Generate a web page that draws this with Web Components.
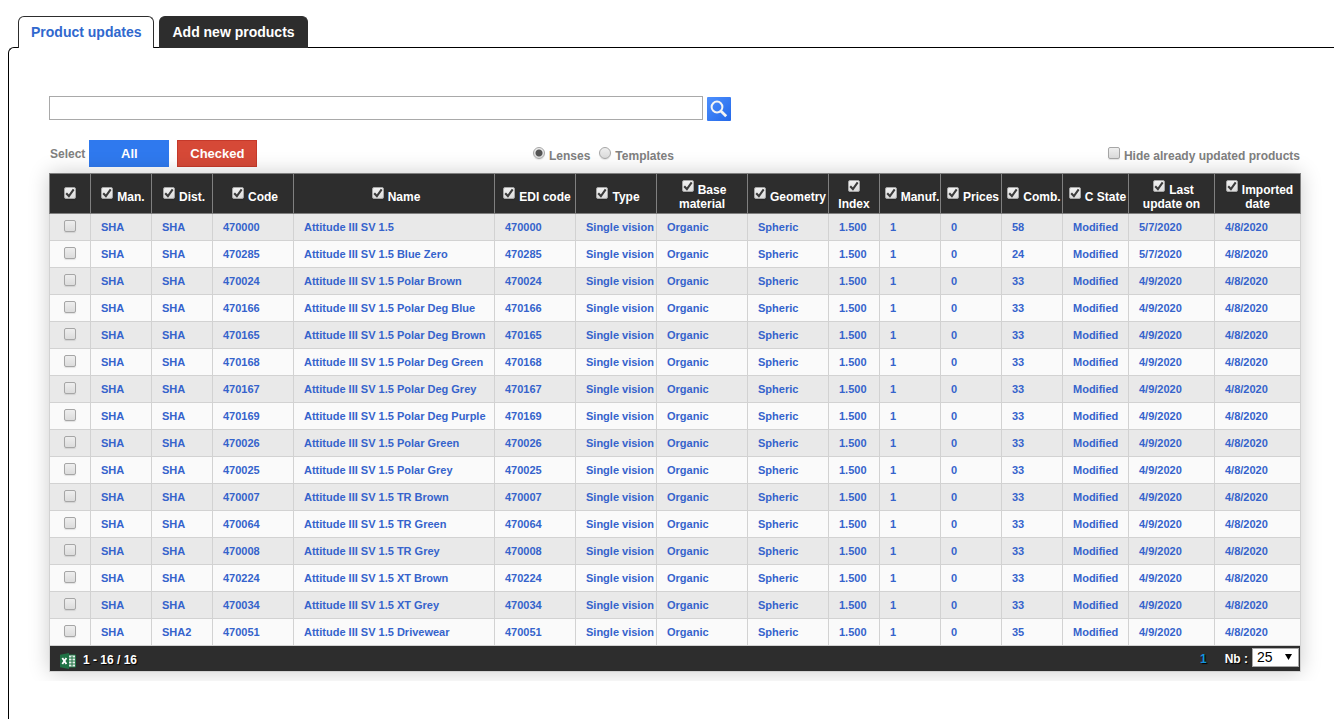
<!DOCTYPE html>
<html lang="en">
<head>
<meta charset="utf-8">
<title>Product updates</title>
<style>
  html { background: #fff; }
  body { margin: 0; font: bold 12px/14px "Liberation Sans", Arial, sans-serif; color: #808080; }
</style>
</head>
<body>
<app-page>
  <tab-bar slot="tabs">
    <tab-item active>Product updates</tab-item>
    <tab-item>Add new products</tab-item>
  </tab-bar>
  <search-box></search-box>
  <select-bar></select-bar>
  <data-card>
    <product-table></product-table>
    <table-footer slot="footer"></table-footer>
  </data-card>
</app-page>

<script>
const svgUrl = (w, h, body) =>
  `url("data:image/svg+xml,${encodeURIComponent(`<svg xmlns='http://www.w3.org/2000/svg' width='${w}' height='${h}' viewBox='0 0 ${w} ${h}'>${body}</svg>`)}")`;

const tick = svgUrl(12, 12, `<path d='M2.2 6.2L4.9 9L9.7 2.4' fill='none' stroke='#3c3c3c' stroke-width='2.1'/>`);
const arrow = svgUrl(7, 6, `<path d='M0 0H7L3.5 6Z' fill='#000'/>`);

const toggles = `
  input[type=checkbox], input[type=radio] {
    appearance: none; box-sizing: border-box; width: 12px; height: 12px;
    margin: 3px 4px 1px 4px; border: 1px solid #a6a6a6; border-radius: 2px;
    background: linear-gradient(#eee, #dcdcdc); box-shadow: 0 1px 1px rgba(0,0,0,.1);
    vertical-align: baseline; flex: none;
  }
  input[type=checkbox]:checked { background: ${tick} center / 12px 12px no-repeat, linear-gradient(#f2f2f2, #dcdcdc); }
  input[type=radio] { border-radius: 50%; }
  input[type=radio]:checked { background: radial-gradient(circle, #555 0 3px, transparent 4px), linear-gradient(#eee, #dcdcdc); }
`;

function define(name, html, setup) {
  const template = document.createElement('template');
  template.innerHTML = html;
  customElements.define(name, class extends HTMLElement {
    constructor() {
      super();
      this.attachShadow({ mode: 'open' }).append(template.content.cloneNode(true));
      if (setup) setup(this.shadowRoot);
    }
  });
}

define('app-page', `
  <style>
    :host { display: flex; flex-direction: column; box-sizing: border-box; min-height: 100vh; padding: 16px 0 0 8px; }
    main { flex: 1; padding: 48px 33px 40px 40px; border: solid #000; border-width: 1px 0 0 1px; border-top-left-radius: 6px; }
  </style>
  <slot name="tabs"></slot>
  <main><slot></slot></main>`);

define('tab-bar', `
  <style>
    :host { display: block; position: relative; margin: 0 0 -1px 10px; }
    nav { display: flex; gap: 5px; }
  </style>
  <nav><slot></slot></nav>`);

define('tab-item', `
  <style>
    :host { display: block; }
    a { display: block; box-sizing: border-box; height: 32px; padding: 0 12px; line-height: 31px; font-size: 14px;
        white-space: nowrap; text-decoration: none; color: #fff; background: #2d2d2d;
        border: 1px solid #2d2d2d; border-bottom: 0; border-radius: 6px 6px 0 0; }
    :host([active]) a { color: #3068ce; background: #fff; }
  </style>
  <a href="#"><slot></slot></a>`);

define('search-box', `
  <style>
    :host { display: block; }
    form { display: flex; gap: 4px; margin: 0; }
    input { flex: 0 1 654px; min-width: 0; box-sizing: border-box; height: 24px; padding: 2px 6px; border: 1px solid #a9a9a9;
            font: 13px "Liberation Sans", Arial, sans-serif; }
    button { width: 24px; height: 24px; margin: 1px 0 0; padding: 0; border: 0; border-radius: 1px;
             background: linear-gradient(135deg, #4d90fe, #2468e8); }
    svg { display: block; }
  </style>
  <form role="search">
    <input type="text" aria-label="Search products">
    <button type="button" aria-label="Search">
      <svg width="24" height="24" viewBox="0 0 24 24" fill="none" stroke="#f4f4f4">
        <circle cx="10" cy="10" r="5.4" stroke-width="2"/>
        <path d="M13.6 13.8L19.2 19.2" stroke-width="2.8"/>
      </svg>
    </button>
  </form>`);

define('select-bar', `
  <style>
    ${toggles}
    :host { display: grid; grid-template-columns: 480fr 772fr; margin: 19px 0 6px; }
    div { display: flex; align-items: center; }
    .pick { gap: 8px; padding-left: 1px; }
    .pick span { margin-right: -4px; }
    .pick span, .pick button { flex: none; }
    button { box-sizing: border-box; width: 80px; height: 27px; padding: 0; border: 1px solid #2f79ee; background: #2f79ee; color: #fff;
             font: bold 13px "Liberation Sans", Arial, sans-serif; }
    button.checked { border-color: #c5392a; background: #d64937; }
    .filters { justify-content: space-between; padding-right: 1px; }
    .kinds { gap: 5px; }
    label { display: block; white-space: nowrap; }
  </style>
  <div class="pick"><span>Select</span><button type="button">All</button><button type="button" class="checked">Checked</button></div>
  <div class="filters">
    <div class="kinds">
      <label><input type="radio" name="kind" checked>Lenses</label>
      <label><input type="radio" name="kind">Templates</label>
    </div>
    <label><input type="checkbox">Hide already updated products</label>
  </div>`);

define('data-card', `
  <style>
    :host { display: block; clip-path: inset(-24px -24px -9px -24px); }
    section { box-shadow: 0 0 20px rgba(0,0,0,.2); }
  </style>
  <section><slot></slot><slot name="footer"></slot></section>`);

const columns = [
  ['', 41], ['Man.', 61], ['Dist.', 61], ['Code', 81], ['Name', 201], ['EDI code', 81], ['Type', 81], ['Base material', 91],
  ['Geometry', 81], ['Index', 51], ['Manuf.', 61], ['Prices', 61], ['Comb.', 61], ['C State', 66], ['Last update on', 86], ['Imported date', 86],
];

const products = [
  ['470000', '', 58, '5/7/2020'],
  ['470285', 'Blue Zero', 24, '5/7/2020'],
  ['470024', 'Polar Brown', 33, '4/9/2020'],
  ['470166', 'Polar Deg Blue', 33, '4/9/2020'],
  ['470165', 'Polar Deg Brown', 33, '4/9/2020'],
  ['470168', 'Polar Deg Green', 33, '4/9/2020'],
  ['470167', 'Polar Deg Grey', 33, '4/9/2020'],
  ['470169', 'Polar Deg Purple', 33, '4/9/2020'],
  ['470026', 'Polar Green', 33, '4/9/2020'],
  ['470025', 'Polar Grey', 33, '4/9/2020'],
  ['470007', 'TR Brown', 33, '4/9/2020'],
  ['470064', 'TR Green', 33, '4/9/2020'],
  ['470008', 'TR Grey', 33, '4/9/2020'],
  ['470224', 'XT Brown', 33, '4/9/2020'],
  ['470034', 'XT Grey', 33, '4/9/2020'],
  ['470051', 'Drivewear', 35, '4/9/2020', 'SHA2'],
];

define('product-table', `
  <style>
    ${toggles}
    :host { display: block; }
    table { width: 100%; table-layout: fixed; border-collapse: collapse; }
    th { height: 39px; padding: 0; border: 1px solid #808080; background: #2d2d2d; color: #fff; vertical-align: middle; }
    td { height: 26px; padding: 0 0 0 10px; border: 1px solid #d2d2d2; font-size: 11px; color: #3563cc; white-space: nowrap; }
    th label { display: block; }
    th input[type=checkbox] { margin-bottom: 2px; }
    td:first-child { padding: 0; text-align: center; }
    td:first-child input { display: block; margin: 0 auto 2px; }
    tbody tr:nth-child(odd) { background: #e9e9e9; }
    tbody tr:nth-child(even) { background: #fafafa; }
  </style>
  <table><colgroup></colgroup><thead><tr></tr></thead><tbody></tbody></table>`, root => {
  root.querySelector('colgroup').innerHTML = columns.map(([, w]) => `<col style="width:${w}px">`).join('');
  root.querySelector('thead tr').innerHTML = columns.map(([name]) =>
    `<th scope="col"><label><input type="checkbox" checked${name ? '' : ' aria-label="Select all"'}>${name}</label></th>`).join('');
  root.querySelector('tbody').innerHTML = products.map(([code, variant, comb, date, dist = 'SHA']) => {
    const cells = ['SHA', dist, code, `Attitude III SV 1.5 ${variant}`.trim(), code, 'Single vision', 'Organic', 'Spheric', '1.500', 1, 0, comb, 'Modified', date, '4/8/2020'];
    return `<tr><td><input type="checkbox" aria-label="Select ${code}"></td>${cells.map(c => `<td>${c}</td>`).join('')}</tr>`;
  }).join('');
});

define('table-footer', `
  <style>
    :host { display: flex; align-items: center; box-sizing: border-box; height: 26px; padding: 0 1px 0 10px;
            border: solid #d2d2d2; border-width: 0 1px 1px; background: #2d2d2d; color: #fff; text-shadow: 1px 1px 1px #000; }
    svg { display: block; margin: 4px 7px 0 0; }
    span { padding-top: 3px; }
    a { margin: 0 18px 0 auto; color: #1492dc; text-decoration: none; }
    label { display: flex; align-items: center; gap: 4px; }
    select { appearance: none; box-sizing: border-box; width: 47px; height: 19px; margin: 0 0 3px; padding: 0 0 0 4px; border: 1px solid #a9a9a9; border-radius: 0;
             background: #fff ${arrow} 32px 5px no-repeat; color: #000; font: 14px "Liberation Sans", Arial, sans-serif; }
  </style>
  <svg width="16" height="16" viewBox="0 0 16 16" role="img" aria-label="Excel export">
    <path d="M8 2H15.5V14H8Z" fill="#e5efe9" stroke="#207245"/>
    <path d="M9 5H15M9 8H15M9 11H15M12 3V13.5" stroke="#207245" stroke-width="1"/>
    <path d="M0 1.8L9 0V16L0 14.2Z" fill="#207245"/>
    <path d="M2.3 5L6.4 11M6.4 5L2.3 11" stroke="#fff" stroke-width="1.8"/>
  </svg>
  <span>1 - 16 / 16</span>
  <a href="#">1</a>
  <label>Nb : <select><option>10</option><option selected>25</option><option>50</option></select></label>`);
</script>
</body>
</html>
